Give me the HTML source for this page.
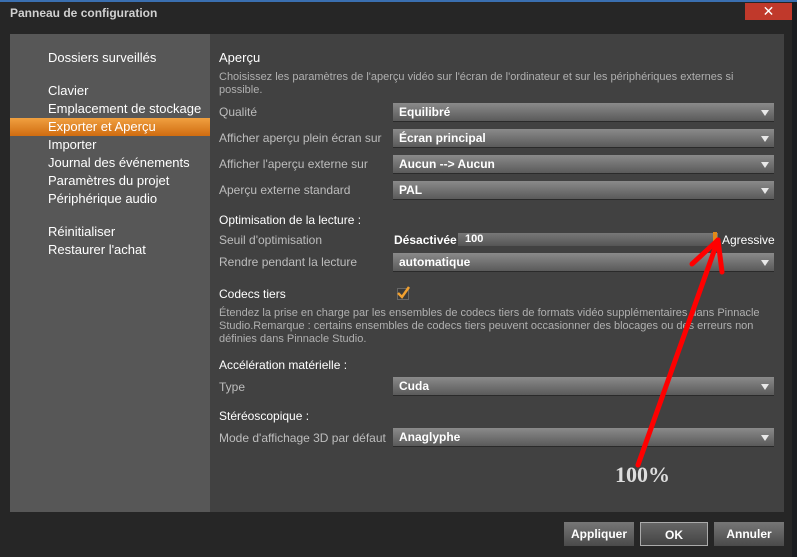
<html><head><style>
body{margin:0;width:797px;height:557px;background:#1a1c20;font-family:"Liberation Sans",sans-serif;position:relative;overflow:hidden}
.win{position:absolute;left:0;top:2px;width:792px;height:555px;background:#262626}
.t{position:absolute;white-space:nowrap}
.side{position:absolute;left:10px;top:34px;width:200px;height:478px;background:#575757}
.main{position:absolute;left:210px;top:34px;width:574px;height:478px;background:#414141}
.sl{position:absolute;left:48px;color:#fff;font-size:13px}
.lab{position:absolute;left:219px;color:#bdbdbd;font-size:12px}
.hd{position:absolute;left:219px;color:#fff;font-size:12px}
.dd{position:absolute;left:393px;width:381px;height:19px;background:linear-gradient(#8a8a8a,#5a5a5a);border-bottom:1px solid #2a2a2a;color:#fff;font-size:12px;font-weight:bold;line-height:19px;box-sizing:border-box;padding-left:6px}
.dd:after{content:"";position:absolute;right:5px;top:7px;border-left:4px solid transparent;border-right:4px solid transparent;border-top:6px solid #e8e8e8}
.btn{position:absolute;top:522px;height:24px;background:linear-gradient(#777,#4a4a4a);color:#fff;font-size:12px;font-weight:bold;text-align:center;line-height:24px;box-sizing:border-box}
</style></head><body>
<div style="position:absolute;left:0;top:0;width:797px;height:2px;background:#3a6fb0"></div>
<div class="win"></div>
<div class="t" style="left:10px;top:6px;color:#d0d0d0;font-size:12px;font-weight:bold">Panneau de configuration</div>
<div style="position:absolute;left:745px;top:3px;width:47px;height:17px;background:#c0392b;color:#fff;text-align:center;font-size:14px;line-height:17px">✕</div>
<div class="side"></div>
<div style="position:absolute;left:10px;top:118px;width:200px;height:18px;background:linear-gradient(#f0a040,#d06c10)"></div>
<div class="sl" style="top:50px">Dossiers surveillés</div>
<div class="sl" style="top:83px">Clavier</div>
<div class="sl" style="top:101px">Emplacement de stockage</div>
<div class="sl" style="top:119px">Exporter et Aperçu</div>
<div class="sl" style="top:137px">Importer</div>
<div class="sl" style="top:155px">Journal des événements</div>
<div class="sl" style="top:173px">Paramètres du projet</div>
<div class="sl" style="top:191px">Périphérique audio</div>
<div class="sl" style="top:224px">Réinitialiser</div>
<div class="sl" style="top:242px">Restaurer l'achat</div>
<div class="main"></div>
<div class="hd" style="top:50px;font-size:13px">Aperçu</div>
<div class="lab" style="top:71px;font-size:11px;width:560px;white-space:normal;line-height:13px;color:#b0b0b0">Choisissez les paramètres de l'aperçu vidéo sur l'écran de l'ordinateur et sur les périphériques externes si possible.</div>
<div class="lab" style="top:105px">Qualité</div><div class="dd" style="top:103px">Equilibré</div>
<div class="lab" style="top:131px">Afficher aperçu plein écran sur</div><div class="dd" style="top:129px">Écran principal</div>
<div class="lab" style="top:157px">Afficher l'aperçu externe sur</div><div class="dd" style="top:155px">Aucun --&gt; Aucun</div>
<div class="lab" style="top:183px">Aperçu externe standard</div><div class="dd" style="top:181px">PAL</div>
<div class="hd" style="top:213px">Optimisation de la lecture :</div>
<div class="lab" style="top:233px">Seuil d'optimisation</div>
<div class="t" style="left:394px;top:233px;color:#fff;font-size:12px;font-weight:bold">Désactivée</div>
<div style="position:absolute;left:458px;top:233px;width:260px;height:13px;background:linear-gradient(#777,#555)"></div>
<div class="t" style="left:465px;top:233px;color:#fff;font-size:11px;font-weight:bold">100</div>
<div style="position:absolute;left:713px;top:232px;width:4px;height:14px;background:#e08a1a"></div>
<div class="t" style="left:722px;top:233px;color:#fff;font-size:12px">Agressive</div>
<div class="lab" style="top:255px">Rendre pendant la lecture</div><div class="dd" style="top:253px">automatique</div>
<div class="hd" style="top:287px">Codecs tiers</div>
<div style="position:absolute;left:397px;top:288px;width:10px;height:10px;border:1px solid #666;background:#3a3a3a"></div>
<svg style="position:absolute;left:395px;top:284px" width="16" height="16"><path d="M3 9 L7 13 L14 3" stroke="#f0a030" stroke-width="2.5" fill="none"/></svg>
<div class="lab" style="top:307px;font-size:11px;width:560px;white-space:normal;line-height:13px;color:#b0b0b0">Étendez la prise en charge par les ensembles de codecs tiers de formats vidéo supplémentaires dans Pinnacle Studio.Remarque : certains ensembles de codecs tiers peuvent occasionner des blocages ou des erreurs non définies dans Pinnacle Studio.</div>
<div class="hd" style="top:358px">Accélération matérielle :</div>
<div class="lab" style="top:380px">Type</div><div class="dd" style="top:377px">Cuda</div>
<div class="hd" style="top:409px">Stéréoscopique :</div>
<div class="lab" style="top:431px">Mode d'affichage 3D par défaut</div><div class="dd" style="top:428px">Anaglyphe</div>
<svg style="position:absolute;left:0;top:0" width="797" height="557"><g stroke="#ff0000" stroke-width="5" fill="none" stroke-linecap="round"><line x1="638" y1="465" x2="718" y2="240"/><line x1="718" y1="240" x2="692" y2="264"/><line x1="718" y1="240" x2="722" y2="272"/></g></svg>
<div class="t" style="left:615px;top:462px;color:#ddd;font-size:22px;font-weight:bold;font-family:'Liberation Serif',serif">100%</div>
<div class="btn" style="left:564px;width:70px">Appliquer</div>
<div class="btn" style="left:640px;width:68px;border:1px solid #aaa;background:linear-gradient(#666,#444)">OK</div>
<div class="btn" style="left:714px;width:70px">Annuler</div>
</body></html>
